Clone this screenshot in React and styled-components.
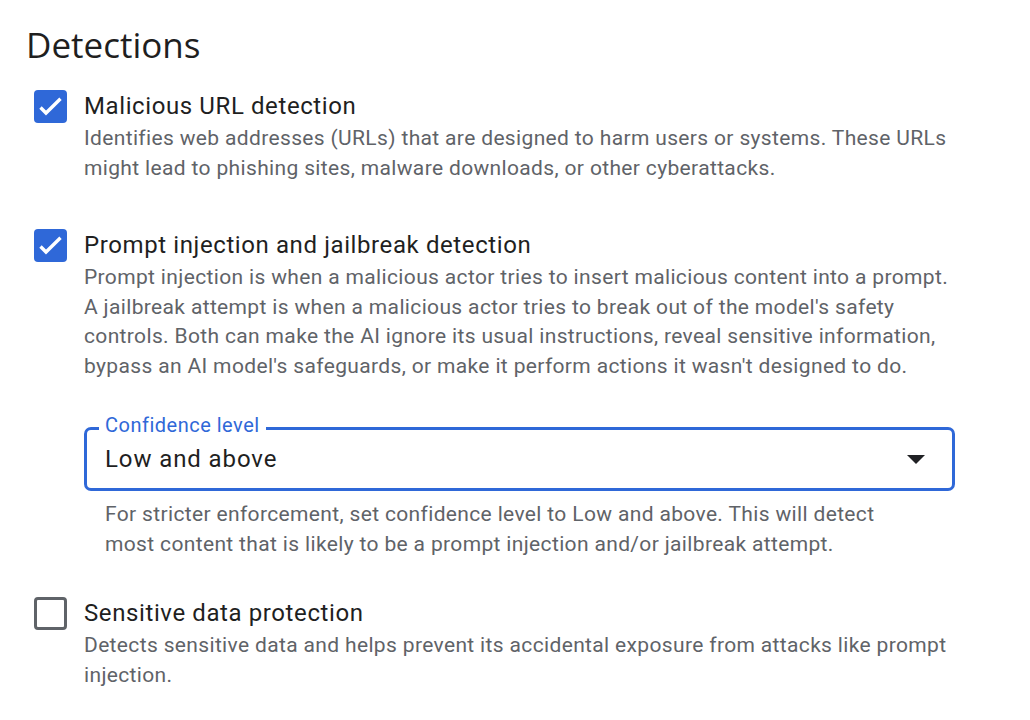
import styled, { createGlobalStyle } from 'styled-components'

const GlobalStyle = createGlobalStyle`
  html, body {
    margin: 0;
    background: #ffffff;
  }
  body {
    font-family: Roboto, "Liberation Sans", Arial, sans-serif;
    color: #1f1f1f;
  }
`

const Page = styled.div`
  padding: 25px 26px 0 26px;
`

const Title = styled.h2`
  margin: 0;
  font-family: "Open Sans", Roboto, sans-serif;
  font-size: 35px;
  line-height: 40px;
  font-weight: 400;
  color: #1f1f1f;
`

const List = styled.div`
  display: flex;
  flex-direction: column;
  margin-top: 23px;
  padding-left: 8px;
`

const Row = styled.div`
  display: grid;
  grid-template-columns: 33px 871px;
  column-gap: 17px;
  margin-top: ${(p) => p.$gap || 0}px;
`

const Box = styled.div`
  box-sizing: border-box;
  width: 33px;
  height: 33px;
  margin-top: 2px;
  border-radius: 4px;
  display: flex;
  background: ${(p) => (p.$checked ? '#2f68d8' : '#ffffff')};
  border: ${(p) => (p.$checked ? 'none' : '3px solid #5f6368')};
`

const Body = styled.div`
  display: flex;
  flex-direction: column;
`

const Label = styled.div`
  font-size: 24px;
  line-height: 36px;
  letter-spacing: 0.6px;
  color: #1f1f1f;
`

const Desc = styled.div`
  font-size: 21px;
  line-height: 29.5px;
  letter-spacing: 0.35px;
  color: #5f6368;
`

const Select = styled.div`
  position: relative;
  box-sizing: border-box;
  height: 64px;
  margin-top: 46px;
  border: 3px solid #2f68d8;
  border-radius: 7px;
  display: flex;
  align-items: center;
  justify-content: space-between;
  padding: 0 27px 0 18px;
`

const FloatLabel = styled.span`
  position: absolute;
  top: -16px;
  left: 12px;
  padding: 0 6px;
  background: #ffffff;
  font-size: 20px;
  line-height: 22px;
  letter-spacing: 0.5px;
  color: #2f68d8;
`

const Value = styled.span`
  font-size: 24px;
  line-height: 32px;
  letter-spacing: 0.9px;
  color: #1f1f1f;
`

const Arrow = styled.span`
  width: 0;
  height: 0;
  border-left: 9px solid transparent;
  border-right: 9px solid transparent;
  border-top: 9px solid #202124;
`

const Helper = styled(Desc)`
  margin-top: 9px;
  padding: 0 60px 0 21px;
`

const Check = () => (
  <svg width="33" height="33" viewBox="0 0 33 33" fill="none">
    <path d="M6.5 17.5L12 23L26.5 8.8" stroke="#ffffff" strokeWidth="3.4" />
  </svg>
)

const Option = ({ checked, title, gap, children }) => (
  <Row $gap={gap}>
    <Box $checked={checked}>{checked && <Check />}</Box>
    <Body>
      <Label>{title}</Label>
      {children}
    </Body>
  </Row>
)

export default function App() {
  return (
    <Page>
      <GlobalStyle />
      <Title>Detections</Title>
      <List>
        <Option checked title="Malicious URL detection">
          <Desc>
            Identifies web addresses (URLs) that are designed to harm users or systems. These URLs
            might lead to phishing sites, malware downloads, or other cyberattacks.
          </Desc>
        </Option>
        <Option checked gap={44} title="Prompt injection and jailbreak detection">
          <Desc>
            Prompt injection is when a malicious actor tries to insert malicious content into a prompt.
            A jailbreak attempt is when a malicious actor tries to break out of the model's safety
            controls. Both can make the AI ignore its usual instructions, reveal sensitive information,
            bypass an AI model's safeguards, or make it perform actions it wasn't designed to do.
          </Desc>
          <Select>
            <FloatLabel>Confidence level</FloatLabel>
            <Value>Low and above</Value>
            <Arrow />
          </Select>
          <Helper>
            For stricter enforcement, set confidence level to Low and above. This will detect
            most content that is likely to be a prompt injection and/or jailbreak attempt.
          </Helper>
        </Option>
        <Option gap={36} title="Sensitive data protection">
          <Desc>
            Detects sensitive data and helps prevent its accidental exposure from attacks like prompt
            injection.
          </Desc>
        </Option>
      </List>
    </Page>
  )
}
